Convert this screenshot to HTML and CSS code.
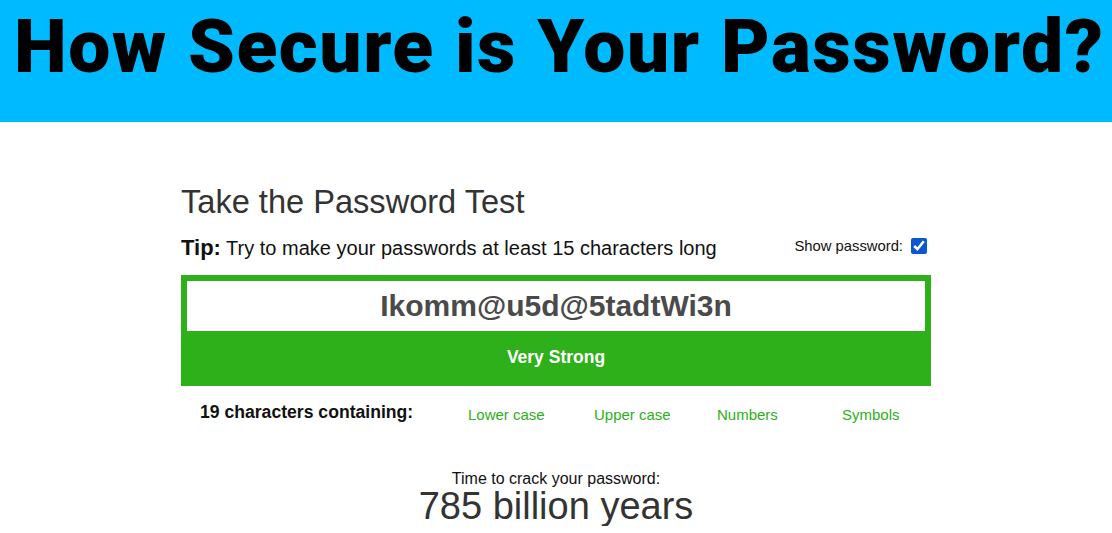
FILE: index.html
```html
<!DOCTYPE html>
<html lang="en">
<head>
<meta charset="utf-8">
<title>How Secure is Your Password?</title>
<link rel="stylesheet" href="styles.css">
</head>
<body>
<header class="banner">
  <h1 class="banner-title">How Secure is Your Password?</h1>
</header>
<main class="test">
  <h2 class="test-title">Take the Password Test</h2>
  <div class="tip-row">
    <p class="tip"><strong class="tip-label">Tip:</strong> Try to make your passwords at least 15 characters long</p>
    <label class="show">Show password: <input class="show-box" type="checkbox" checked></label>
  </div>
  <div class="meter">
    <div class="meter-input">Ikomm@u5d@5tadtWi3n</div>
    <div class="meter-label">Very Strong</div>
  </div>
  <div class="chars">
    <span class="chars-count">19 characters containing:</span>
    <span class="chars-item">Lower case</span>
    <span class="chars-item">Upper case</span>
    <span class="chars-item">Numbers</span>
    <span class="chars-item">Symbols</span>
  </div>
  <div class="crack">
    <div class="crack-label">Time to crack your password:</div>
    <div class="crack-time">785 billion years</div>
  </div>
</main>
</body>
</html>
```
FILE: styles.css
```css
* { box-sizing: border-box; }
body {
  margin: 0;
  font-family: "Liberation Sans", Arial, sans-serif;
  color: #333;
  background: #fff;
}
.banner {
  background: #00baff;
  height: 122px;
  padding-left: 14px;
  overflow: hidden;
}
.banner-title {
  margin: 0;
  font-family: Roboto, "Liberation Sans", sans-serif;
  font-weight: 900;
  font-size: 75px;
  line-height: 92px;
  letter-spacing: 1.5px;
  color: #000;
  white-space: nowrap;
}
.test {
  width: 750px;
  margin: 0 auto;
}
.test-title {
  margin: 0;
  padding-top: 62px;
  font-weight: normal;
  font-size: 32.6px;
  line-height: 36px;
  color: #333;
}
.tip-row {
  display: flex;
  justify-content: space-between;
  align-items: center;
  margin-top: 14px;
  height: 28px;
}
.tip {
  margin: 0;
  font-size: 20px;
  color: #111;
}
.tip-label {
  font-size: 22px;
}
.show {
  display: flex;
  align-items: center;
  font-size: 14.8px;
  color: #111;
  padding-right: 4px;
  position: relative;
  top: -2px;
}
.show-box {
  width: 16px;
  height: 16px;
  margin: 0 0 0 8px;
  accent-color: #0b57d0;
}
.meter {
  margin-top: 13px;
  background: #2db019;
  padding: 6px 6px 0;
  height: 111px;
}
.meter-input {
  background: #fff;
  height: 50px;
  text-align: center;
  font-weight: bold;
  font-size: 30px;
  line-height: 50px;
  color: #4a4a4a;
}
.meter-label {
  height: 55px;
  line-height: 53px;
  text-align: center;
  color: #fff;
  font-weight: bold;
  font-size: 17.5px;
}
.chars {
  display: grid;
  grid-template-columns: 287px 126px 123px 125px 1fr;
  align-items: baseline;
  margin-top: 18px;
}
.chars-count {
  padding-left: 19px;
  font-weight: bold;
  font-size: 17.6px;
  color: #111;
  position: relative;
  top: -2px;
}
.chars-item {
  font-size: 15px;
  color: #2db019;
}
.crack {
  text-align: center;
  margin-top: 45px;
}
.crack-label {
  font-size: 16px;
  line-height: 17px;
  color: #111;
}
.crack-time {
  font-size: 38px;
  line-height: 39px;
  color: #333;
}
```
